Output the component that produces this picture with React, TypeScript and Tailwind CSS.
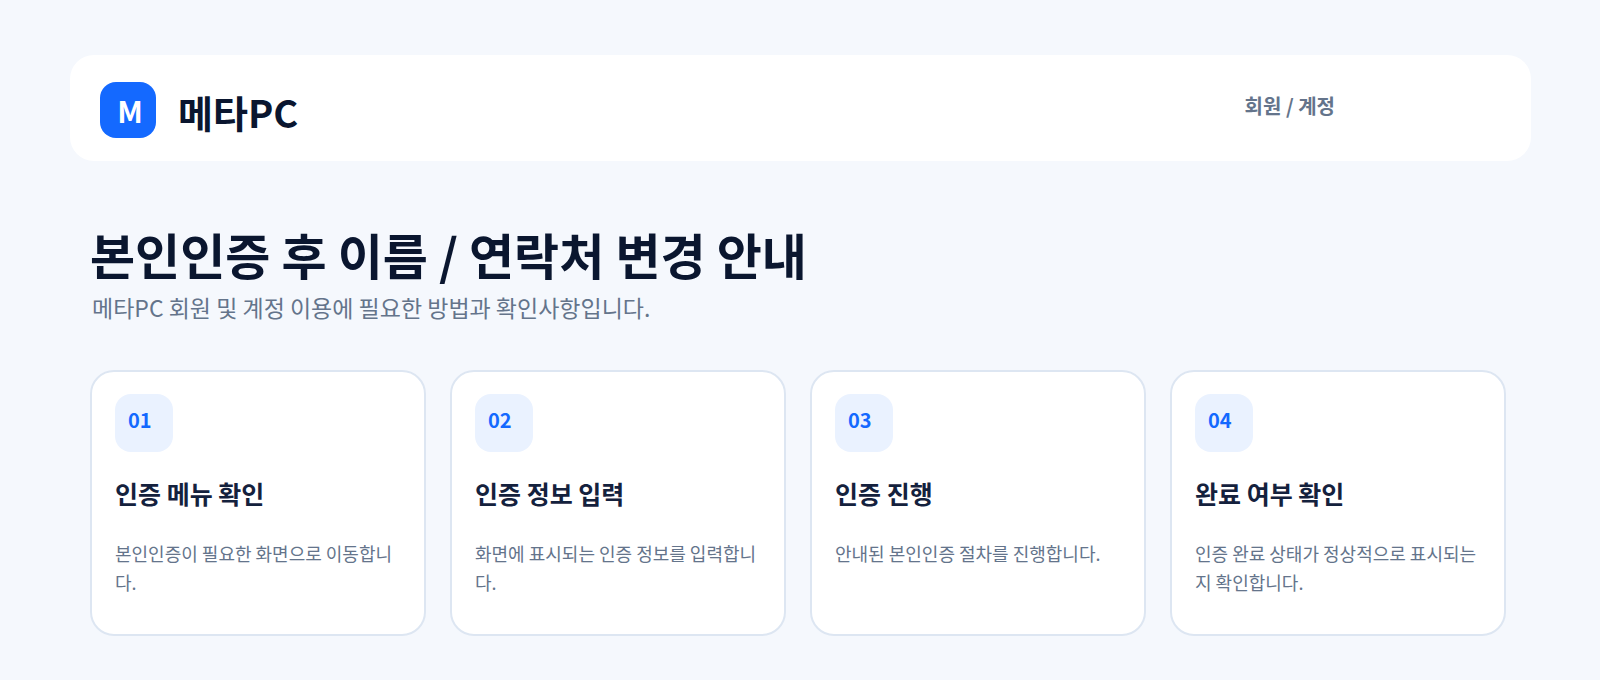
import React from 'react';

interface Step {
  number: string;
  title: string;
  description: string;
}

const steps: Step[] = [
  { number: '01', title: '인증 메뉴 확인', description: '본인인증이 필요한 화면으로 이동합니다.' },
  { number: '02', title: '인증 정보 입력', description: '화면에 표시되는 인증 정보를 입력합니다.' },
  { number: '03', title: '인증 진행', description: '안내된 본인인증 절차를 진행합니다.' },
  { number: '04', title: '완료 여부 확인', description: '인증 완료 상태가 정상적으로 표시되는지 확인합니다.' },
];

const StepCard: React.FC<{ step: Step }> = ({ step }) => (
  <li className="min-h-[266px] rounded-3xl border-2 border-[#dde6f2] bg-white px-[23px] pt-[22px] pb-9">
    <div className="flex h-[58px] w-[58px] items-center rounded-2xl bg-[#eaf2ff] pb-1.5 pl-[13px] text-xl font-bold text-[#1469ff]">
      {step.number}
    </div>
    <h2 className="mt-[22px] text-[25px] leading-[38px] font-bold text-[#14213d]">{step.title}</h2>
    <p className="mt-[27px] text-lg leading-[29px] break-all text-[#64748b]">{step.description}</p>
  </li>
);

export default function App() {
  return (
    <div className="min-h-screen bg-[#f5f8fd] pt-[55px] pr-[69px] pb-11 pl-[70px] font-['Noto_Sans_CJK_KR',sans-serif]">
      {/* Header */}
      <header className="flex items-start justify-between rounded-3xl bg-white pt-[27px] pr-[196px] pb-[23px] pl-[30px]">
        <div className="flex items-start gap-[22px]">
          <div className="flex h-14 w-14 items-center justify-center rounded-2xl bg-[#1469ff] pl-1 text-[30px] font-bold text-white">
            M
          </div>
          <span className="pt-1 text-[38px] leading-[52px] font-bold text-[#0a162f]">메타PC</span>
        </div>
        <span className="pt-2.5 text-xl leading-7 font-bold text-[#64748b]">회원 / 계정</span>
      </header>

      {/* Guide */}
      <main className="pt-[57px] pr-[25px] pl-5">
        <h1 className="text-[49px] leading-[72px] font-bold text-[#0a162f]">본인인증 후 이름 / 연락처 변경 안내</h1>
        <p className="pl-0.5 text-[23px] leading-[34px] text-[#64748b]">메타PC 회원 및 계정 이용에 필요한 방법과 확인사항입니다.</p>
        <ol className="mt-[46px] grid grid-cols-4 gap-6">
          {steps.map((step) => (
            <StepCard key={step.number} step={step} />
          ))}
        </ol>
      </main>
    </div>
  );
}
